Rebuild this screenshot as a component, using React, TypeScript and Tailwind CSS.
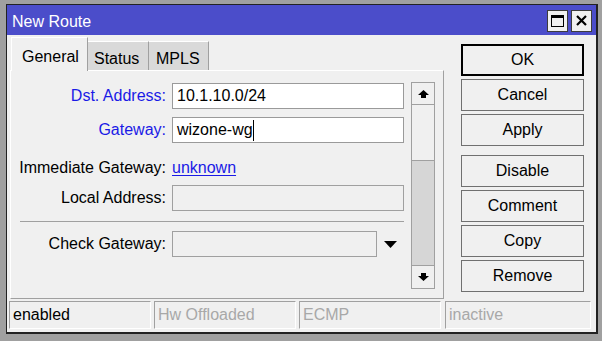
import React from "react";

function Field({
  label,
  blue,
  children,
  className = "",
}: {
  label: string;
  blue?: boolean;
  children: React.ReactNode;
  className?: string;
}) {
  return (
    <div className={`flex items-center h-[26px] ${className}`}>
      <div className={`w-[155px] text-right ${blue ? "text-[#1a1ae6]" : "text-black"}`}>{label}</div>
      <div className="ml-[6px] flex items-center">{children}</div>
    </div>
  );
}

function Arrow({ down }: { down?: boolean }) {
  return (
    <svg width="11" height="8" viewBox="0 0 11 8" className={down ? "rotate-180" : ""}>
      <path d="M5.5 0 L11 5 H8 V8 H3 V5 H0 Z" fill="#000" />
    </svg>
  );
}

function Btn({ children, def, className = "" }: { children: React.ReactNode; def?: boolean; className?: string }) {
  return (
    <div
      className={`w-[123px] h-[32px] flex items-center justify-center bg-[#f0f0f0] ${
        def ? "border-2 border-black" : "border border-[#707070]"
      } ${className}`}
    >
      {children}
    </div>
  );
}

function Cell({ children, w, dim }: { children: React.ReactNode; w: string; dim?: boolean }) {
  return (
    <div
      className={`${w} h-[28px] flex items-center pl-[3px] border-t border-l border-[#a0a0a0] border-r border-b border-r-white border-b-white ${
        dim ? "text-[#a8a8a8]" : "text-black"
      }`}
    >
      {children}
    </div>
  );
}

export default function App() {
  return (
    <div className="w-[602px] h-[341px] bg-[#a0a0a0] pt-[4px] pl-[6px] font-['Liberation_Sans',Arial,sans-serif] text-[16px] leading-none text-black overflow-hidden">
      <div className="w-[592px] h-[330px] border-l border-t border-r-2 border-b-2 border-[#222222] bg-[#f0f0f0] flex flex-col">
        {/* title bar */}
        <div className="h-[30px] shrink-0 bg-[#4b4dca] flex items-center pl-[5px] pr-[4px]">
          <span className="text-white pt-[3px]">New Route</span>
          <div className="ml-auto flex gap-[3px] mt-[1px]">
            <div className="w-[21px] h-[22px] bg-[#f0f0f0] border border-[#3c3c3c] flex items-center justify-center">
              <div className="w-[13px] h-[12px] border border-t-[3px] border-black" />
            </div>
            <div className="w-[21px] h-[22px] bg-[#f0f0f0] border border-[#3c3c3c] flex items-center justify-center">
              <svg width="11" height="11" viewBox="0 0 11 11">
                <path d="M1 1 L10 10 M10 1 L1 10" stroke="#000" strokeWidth="2.2" />
              </svg>
            </div>
          </div>
        </div>

        {/* body */}
        <div className="flex-1 flex flex-col">
          <div className="flex">
            {/* left: tabs + panel */}
            <div className="ml-[3px] w-[434px] flex flex-col">
              <div className="mt-[2px] h-[33px] flex items-end">
                <div className="relative z-10 ml-[1px] w-[77px] h-[34px] -mb-[1px] bg-[#f0f0f0] border-l border-t border-white border-r border-r-[#a0a0a0] pl-[10px] pt-[11px]">
                  General
                </div>
                <div className="w-[61px] h-[29px] bg-[#d9d9d9] border-t border-white border-r border-r-[#a0a0a0] pl-[6px] pt-[9px]">
                  Status
                </div>
                <div className="w-[60px] h-[29px] bg-[#d9d9d9] border-t border-white border-r border-r-[#a0a0a0] pl-[7px] pt-[9px]">
                  MPLS
                </div>
              </div>
              <div className="h-[229px] border-l border-t border-white border-r border-b border-r-[#a0a0a0] border-b-[#a0a0a0] flex">
                {/* form */}
                <div className="w-[400px] pt-[12px] flex flex-col">
                  <Field label="Dst. Address:" blue>
                    <div className="w-[232px] h-[26px] bg-white border border-[#9a9a9a] pl-[4px] flex items-center">
                      10.1.10.0/24
                    </div>
                  </Field>
                  <Field label="Gateway:" blue className="mt-[8px]">
                    <div className="w-[232px] h-[26px] bg-white border border-[#9a9a9a] pl-[4px] flex items-center">
                      wizone-wg
                      <span className="inline-block w-px h-[21px] bg-black" />
                    </div>
                  </Field>
                  <Field label="Immediate Gateway:" className="mt-[12px]">
                    <span className="text-[#1a1ae6] underline underline-offset-[2px]">unknown</span>
                  </Field>
                  <Field label="Local Address:" className="mt-[4px]">
                    <div className="w-[232px] h-[26px] bg-[#f0f0f0] border border-[#a0a0a0]" />
                  </Field>
                  <div className="mt-[10px] ml-[9px] w-[384px] h-px bg-[#a0a0a0]" />
                  <Field label="Check Gateway:" className="mt-[9px]">
                    <div className="w-[205px] h-[26px] bg-[#f0f0f0] border border-[#a0a0a0]" />
                    <svg width="13" height="7" viewBox="0 0 13 7" className="ml-[7px]">
                      <path d="M0 0 H13 L6.5 7 Z" fill="#000" />
                    </svg>
                  </Field>
                </div>
                {/* scrollbar */}
                <div className="mt-[11px] w-[24px] h-[207px] flex flex-col border border-[#a0a0a0]">
                  <div className="h-[22px] bg-[#f0f0f0] border-b border-[#a0a0a0] flex items-center justify-center">
                    <Arrow />
                  </div>
                  <div className="h-[56px] bg-[#f0f0f0] border-b border-[#a0a0a0]" />
                  <div className="flex-1 bg-[#d6d6d6]" />
                  <div className="h-[23px] bg-[#f0f0f0] border-t border-[#a0a0a0] flex items-center justify-center">
                    <Arrow down />
                  </div>
                </div>
              </div>
            </div>
            {/* right buttons */}
            <div className="ml-[17px] mt-[9px] flex flex-col">
              <Btn def>OK</Btn>
              <Btn className="mt-[3px]">Cancel</Btn>
              <Btn className="mt-[3px]">Apply</Btn>
              <Btn className="mt-[9px]">Disable</Btn>
              <Btn className="mt-[3px]">Comment</Btn>
              <Btn className="mt-[3px]">Copy</Btn>
              <Btn className="mt-[3px]">Remove</Btn>
            </div>
          </div>
          {/* status bar */}
          <div className="mt-[2px] ml-[2px] flex">
            <Cell w="w-[142px]">enabled</Cell>
            <div className="w-[3px]" />
            <Cell w="w-[142px]" dim>Hw Offloaded</Cell>
            <div className="w-[3px]" />
            <Cell w="w-[142px]" dim>ECMP</Cell>
            <div className="w-[4px]" />
            <Cell w="w-[146px]" dim>inactive</Cell>
          </div>
        </div>
      </div>
    </div>
  );
}
